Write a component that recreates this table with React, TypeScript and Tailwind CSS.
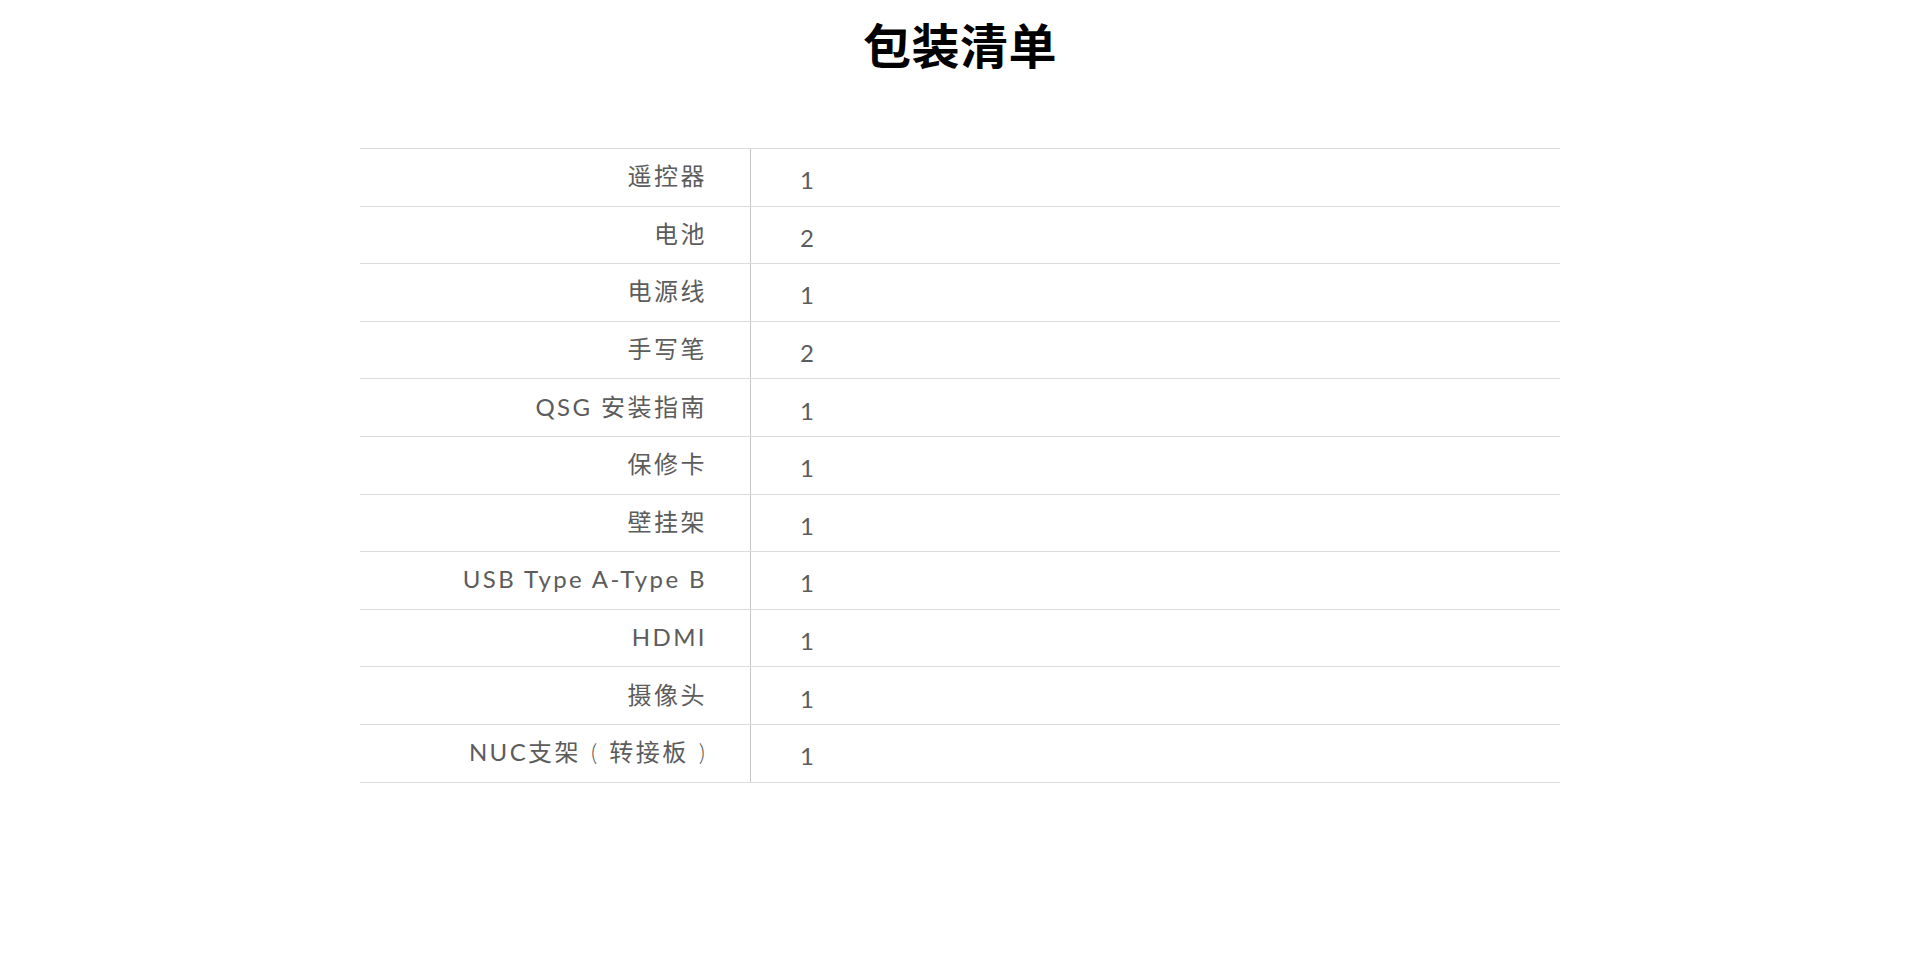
import React from "react";

type Seg = { t: string; latin?: boolean };

const rows: [Seg[], string][] = [
  [[{ t: "遥控器" }], "1"],
  [[{ t: "电池" }], "2"],
  [[{ t: "电源线" }], "1"],
  [[{ t: "手写笔" }], "2"],
  [[{ t: "QSG ", latin: true }, { t: "安装指南" }], "1"],
  [[{ t: "保修卡" }], "1"],
  [[{ t: "壁挂架" }], "1"],
  [[{ t: "USB Type A-Type B", latin: true }], "1"],
  [[{ t: "HDMI", latin: true }], "1"],
  [[{ t: "摄像头" }], "1"],
  [[{ t: "NUC", latin: true }, { t: "支架" }, { t: "(", latin: true }, { t: "转接板" }, { t: ")", latin: true }], "1"],
];

function Label({ segs }: { segs: Seg[] }) {
  return (
    <span className="whitespace-pre">
      {segs.map((s, i) =>
        s.t === "(" ? (
          <span key={i} className="font-light tracking-normal ml-[10px] mr-[12px]">(</span>
        ) : s.t === ")" ? (
          <span key={i} className="font-light tracking-normal ml-[10px] mr-[2px]">)</span>
        ) : s.latin ? (
          <span key={i} className="tracking-[2.4px]">{s.t}</span>
        ) : (
          <span key={i} className="tracking-[2.5px]" style={{ fontFamily: '"Noto Sans CJK SC", sans-serif' }}>{s.t}</span>
        )
      )}
    </span>
  );
}

export default function App() {
  return (
    <div
      className="w-full min-h-[971px] bg-white"
      style={{ fontFamily: 'Lato, "Noto Sans CJK SC", sans-serif' }}
    >
      <div className="h-[148px] pt-[11px] flex justify-center">
        <h1 className="text-[48px] leading-[64px] font-bold text-black tracking-[0.5px]" style={{ fontFamily: '"Noto Sans CJK SC", sans-serif' }}>
          包装清单
        </h1>
      </div>
      <div className="mx-auto w-[1200px] border-t border-[#dcdcdc]">
        {rows.map(([segs, qty], i) => (
          <div key={i} className="flex h-[57.6px] border-b border-[#dcdcdc]">
            <div className="w-[391px] shrink-0 flex items-center justify-end pr-[43px] pb-[3px] text-[24px] text-[#5c5c5c] border-r border-[#c4c4c4]">
              <Label segs={segs} />
            </div>
            <div className="flex-1 flex items-center pl-[49px] pt-[6px] text-[24px] text-[#5c5c5c]">
              {qty}
            </div>
          </div>
        ))}
      </div>
    </div>
  );
}
